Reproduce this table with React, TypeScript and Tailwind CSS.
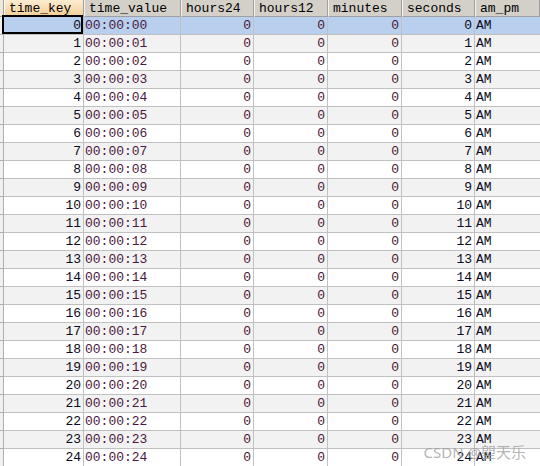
import React from 'react';

const cols = [
  { key: 'time_key', w: 'w-[80px]' },
  { key: 'time_value', w: 'w-[97px]' },
  { key: 'hours24', w: 'w-[73px]' },
  { key: 'hours12', w: 'w-[74px]' },
  { key: 'minutes', w: 'w-[74px]' },
  { key: 'seconds', w: 'w-[73px]' },
  { key: 'am_pm', w: 'flex-1' },
];

const pad = (n: number) => String(n).padStart(2, '0');

const rows = Array.from({ length: 25 }, (_, i) => i);

export default function App() {
  return (
    <div className="relative h-[466px] w-[540px] overflow-hidden bg-white font-['Liberation_Mono',monospace] text-[13px] leading-none">
      {/* Header */}
      <div className="flex h-[17px]">
        <div className="w-[4px] shrink-0 border-r border-b border-[#a0a0a0] bg-[#ece9d8]" />
        {cols.map((c, idx) => (
          <div
            key={c.key}
            className={`${c.w} shrink-0 flex items-center border-r border-b border-[#a0a0a0] pl-[4px] pt-[1px] text-black ${
              idx === 0
                ? 'bg-gradient-to-b from-[#fcecd0] to-[#f3cf98] border-l border-l-white'
                : 'bg-[#d4d0c8] border-l border-l-[#f4f2ee]'
            }`}
          >
            {c.key}
          </div>
        ))}
      </div>

      {rows.map((i) => {
        const sel = i === 0;
        const bg = sel ? 'bg-[#b8cfee]' : i % 2 === 1 ? 'bg-[#f2f2f2]' : 'bg-white';
        return (
          <div key={i} className="flex h-[18px]">
            <div className="w-[4px] shrink-0 border-r border-b border-[#b0b0b0] bg-[#f0f0f0]" />
            <div
              className={`relative w-[80px] shrink-0 flex items-center justify-end pr-[2px] border-r border-b border-[#c0c0c0] text-[#0a0a20] ${bg}`}
            >
              {sel && <div className="absolute -left-[2px] -top-[2px] right-0 bottom-0 border-2 border-black" />}
              {i}
            </div>
            <div className={`w-[97px] shrink-0 flex items-center pl-[1px] border-r border-b border-[#c0c0c0] text-[#4c1840] ${bg}`}>
              00:00:{pad(i)}
            </div>
            <div className={`w-[73px] shrink-0 flex items-center justify-end pr-[2px] border-r border-b border-[#c0c0c0] text-[#4a1530] ${bg}`}>
              0
            </div>
            <div className={`w-[74px] shrink-0 flex items-center justify-end pr-[2px] border-r border-b border-[#c0c0c0] text-[#4a1530] ${bg}`}>
              0
            </div>
            <div className={`w-[74px] shrink-0 flex items-center justify-end pr-[2px] border-r border-b border-[#c0c0c0] text-[#4a1530] ${bg}`}>
              0
            </div>
            <div className={`w-[73px] shrink-0 flex items-center justify-end pr-[2px] border-r border-b border-[#c0c0c0] text-[#0a0a20] ${bg}`}>
              {i}
            </div>
            <div className={`flex-1 flex items-center pl-[1px] border-b border-[#c0c0c0] text-[#0a0a20] ${bg}`}>
              AM
            </div>
          </div>
        );
      })}

      {/* Watermark */}
      <div className="absolute right-[14px] bottom-[6px] font-['Noto_Sans','Noto_Sans_CJK_SC',sans-serif] text-[15px] text-[#a0a0a0]/80">
        CSDN @塱天乐
      </div>
    </div>
  );
}
